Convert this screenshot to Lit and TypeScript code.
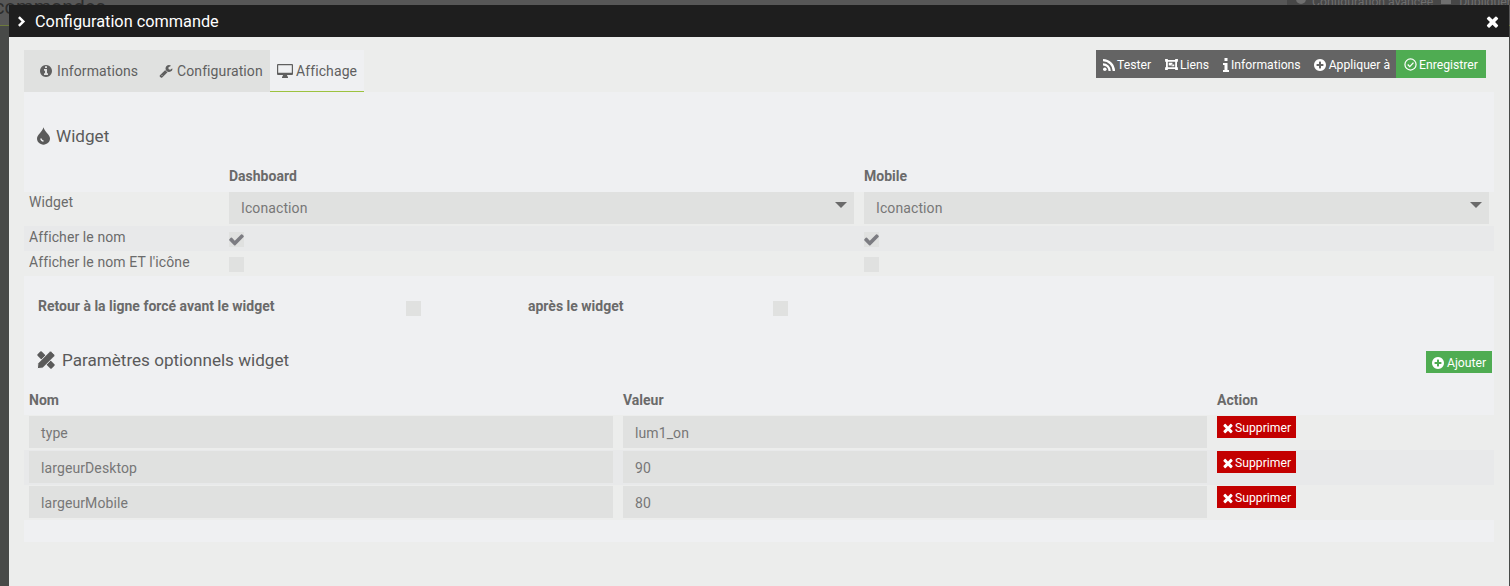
import { LitElement, html, css, svg } from "lit";
import { customElement } from "lit/decorators.js";

const I = (vb: string, body: unknown, w: number, h: number) => html`<svg class="ic" viewBox=${vb} width=${w} height=${h} fill="currentColor">${body}</svg>`;

const fa = (d: string, w = 14, h = 14, vb = "0 0 1792 1792") => I(vb, svg`<path d=${d}></path>`, w, h);

const infoCircle = "M1152 1376v-160q0-14-9-23t-23-9h-96v-512q0-14-9-23t-23-9h-320q-14 0-23 9t-9 23v160q0 14 9 23t23 9h96v320h-96q-14 0-23 9t-9 23v160q0 14 9 23t23 9h448q14 0 23-9t9-23zm-128-896v-160q0-14-9-23t-23-9h-192q-14 0-23 9t-9 23v160q0 14 9 23t23 9h192q14 0 23-9t9-23zm640 416q0 209-103 385.5t-279.5 279.5-385.5 103-385.5-103-279.5-279.5-103-385.5 103-385.5 279.5-279.5 385.5-103 385.5 103 279.5 279.5 103 385.5z";
const wrench = "M448 1472q0-26-19-45t-45-19-45 19-19 45 19 45 45 19 45-19 19-45zm644-420l-682 682q-37 37-90 37-52 0-91-37l-106-108q-38-36-38-90 0-53 38-91l681-681q39 98 114.5 173.5t173.5 114.5zm634-435q0 39-23 106-47 134-164.5 217.5t-258.5 83.5q-185 0-316.5-131.5t-131.5-316.5 131.5-316.5 316.5-131.5q58 0 121.5 16.5t107.5 46.5q16 11 16 28t-16 28l-293 169v224l193 107q5-3 79-48.5t135.5-81 70.5-35.5q15 0 23.5 10t8.5 25z";
const plusCircle = "M1344 960v-128q0-26-19-45t-45-19h-256v-256q0-26-19-45t-45-19h-128q-26 0-45 19t-19 45v256h-256q-26 0-45 19t-19 45v128q0 26 19 45t45 19h256v256q0 26 19 45t45 19h128q26 0 45-19t19-45v-256h256q26 0 45-19t19-45zm320-64q0 209-103 385.5t-279.5 279.5-385.5 103-385.5-103-279.5-279.5-103-385.5 103-385.5 279.5-279.5 385.5-103 385.5 103 279.5 279.5 103 385.5z";
const times = "M1490 1322q0 40-28 68l-136 136q-28 28-68 28t-68-28l-294-294-294 294q-28 28-68 28t-68-28l-136-136q-28-28-28-68t28-68l294-294-294-294q-28-28-28-68t28-68l136-136q28-28 68-28t68 28l294 294 294-294q28-28 68-28t68 28l136 136q28 28 28 68t-28 68l-294 294 294 294q28 28 28 68z";
const check = "M1671 566q0 40-28 68l-724 724-136 136q-28 28-68 28t-68-28l-136-136-362-362q-28-28-28-68t28-68l136-136q28-28 68-28t68 28l294 295 656-657q28-28 68-28t68 28l136 136q28 28 28 68z";

const desktop = I("0 0 16 14", svg`<path fill-rule="evenodd" d="M1 0h14a1 1 0 0 1 1 1v9a1 1 0 0 1-1 1H10q0 1 1 2v1H5v-1q1-1 1-2H1a1 1 0 0 1-1-1V1a1 1 0 0 1 1-1zm.2 1.200v7.600h13.600V1.200z"></path>`, 16, 14);
const drop = I("0 0 12 16", svg`<path fill-rule="evenodd" d="M6 0c.6 2.200 2 3.600 3.600 5.800C11 7.600 12 8.900 12 10.400 12 13.600 9.300 16 6 16S0 13.600 0 10.400C0 8.900 1 7.600 2.400 5.800 4 3.600 5.400 2.200 6 0zM3 10.300c0 1.800 1.300 3 3 3v-1.400c-.9 0-1.600-.7-1.600-1.600z"></path>`, 13, 18);
const tools = I("0 0 18 18", svg`<path fill-rule="evenodd" d="M.6 3.300 3.300.6a1 1 0 0 1 1.400 0l12.700 12.700a1 1 0 0 1 0 1.400l-2.700 2.700a1 1 0 0 1-1.400 0L.6 4.700a1 1 0 0 1 0-1.400z"></path><path stroke="#eff0f2" stroke-width="1" d="M12.600.6a1.300 1.300 0 0 1 1.900 0l2.900 2.900a1.300 1.300 0 0 1 0 1.900L5.700 17.100.4 17.600l.5-5.300z"></path>`, 18, 18);
const rss = I("0 0 12 12", svg`<circle cx="1.800" cy="10.200" r="1.800"></circle><path d="M0 4.200v2.300a5.500 5.500 0 0 1 5.500 5.500h2.300A7.800 7.800 0 0 0 0 4.200z"></path><path d="M0 0v2.300A9.700 9.700 0 0 1 9.700 12H12A12 12 0 0 0 0 0z"></path>`, 12, 12);
const ungroup = I("0 0 14 12", svg`<path fill-rule="evenodd" d="M0 0h3v1h8V0h3v3h-1v6h1v3h-3v-1H3v1H0V9h1V3H0zm3 3v6h8V3zM4 4h4v3H4zM7 6h3v2H7z"></path>`, 13, 11);
const infoI = I("0 0 6 14", svg`<rect x="1.500" y="0" width="3" height="3"></rect><path d="M0 5h4.500v7H6v2H0v-2h1.500V7H0z"></path>`, 6, 14);
const checkO = I("0 0 14 14", svg`<circle cx="7" cy="7" r="6" fill="none" stroke="currentColor" stroke-width="1.300"></circle><path d="M4 7l2.200 2.300L10.200 5" fill="none" stroke="currentColor" stroke-width="1.400"></path>`, 13, 13);
const gear = I("0 0 14 14", svg`<circle cx="7" cy="7" r="5"></circle>`, 14, 14);
const copy = I("0 0 14 14", svg`<rect x="0" y="0" width="10" height="12"></rect>`, 14, 14);

const params = [["type", "lum1_on"], ["largeurDesktop", "90"], ["largeurMobile", "80"]];

@customElement("app-root")
export class AppRoot extends LitElement {
  static styles = css`
    :host { display: block; position: relative; width: 1510px; height: 586px; overflow: hidden; background: #484a48; font-family: Roboto, "Liberation Sans", sans-serif; font-size: 14px; color: #6b6b6b; letter-spacing: .1px; }
    * { box-sizing: border-box; }
    .ic { display: block; flex: none; }

    .behind { display: flex; height: 26px; border-bottom: 1px solid #6d7a3c; background: #575757; }
    .behind-title { font-size: 20px; line-height: 14px; color: #2c2c2c; margin-left: -6px; }
    .behind-tools { margin-left: auto; display: flex; gap: 4px; height: 5px; width: 223px; padding-left: 7px; background: #474747; overflow: hidden; font-size: 12.2px; line-height: 4px; color: #6f6f6f; white-space: nowrap; letter-spacing: 0; }
    .behind-tools .ic { margin-top: -8px; }
    .behind-tools .sp { width: 7px; }

    .dialog { position: absolute; left: 9px; top: 5px; width: 1500px; height: 581px; display: flex; flex-direction: column; background: #ecedec; }
    .title { height: 32px; flex: none; background: #1e1e1e; color: #fff; display: flex; align-items: center; padding: 0 9px 0 9px; font-size: 16.3px; font-weight: 400; letter-spacing: 0; }
    .title .chev { width: 9px; margin-right: 8px; }
    .title .close { margin-left: auto; margin-right: -1px; }

    .body { padding: 13px 15px 0; flex: 1; }
    .topbar { display: flex; justify-content: space-between; align-items: flex-start; }
    .tabs { display: flex; height: 42px; background: #e0e1e0; }
    .tab { display: flex; align-items: center; gap: 4px; font-size: 14px; color: #5f5f5f; padding: 0 7px 0 7px; }
    .tab.first { padding: 0 13px 0 15px; width: 126px; }
    .tab.second { width: 120px; padding: 0 0 0 9px; }
    .tab.active { width: 94px; background: #eff0f2; border-bottom: 1px solid #9cc23f; gap: 3px; }
    .actions { display: flex; height: 28px; margin-right: 8px; }
    .btn { display: flex; align-items: center; gap: 2px; color: #fff; font-size: 12.2px; font-weight: 400; letter-spacing: 0; white-space: nowrap; padding-top: 1px; }
    .grey { background: #646464; padding: 1px 0 0 7px; gap: 14px; width: 300px; }
    .grey .btn { background: none; padding-top: 0; }
    .grey .plus { margin-left: -2px; }
    .save { background: #4fac52; padding: 1px 0 0 8px; width: 90px; }

    .panel { height: 450px; background: #eff0f2; display: flex; flex-direction: column; }
    .heading { display: flex; align-items: center; font-size: 17.1px; color: #5a5a5a; padding-left: 13px; letter-spacing: 0; }
    .heading.one { height: 74px; padding-top: 29px; padding-bottom: 15px; gap: 6px; }
    .grid-row { display: grid; grid-template-columns: 205px 625px 10px 625px; align-items: start; }
    .colhead { height: 26px; font-weight: 700; color: #6a6a6a; font-size: 14px; line-height: 20px; letter-spacing: 0; }
    .colhead > *:first-child { grid-column: 2; }
    .colhead > *:last-child { grid-column: 4; }
    .cell-label { padding-left: 5px; font-size: 14px; line-height: 20px; }
    .r-check .cell-label { padding-top: 1px; }
    .r-select { height: 34px; }
    .r-check { height: 25px; }
    .shade { background: #e8e9ea; }
    .plain { background: #ecedec; }
    .field { background: #e0e1e0; height: 32px; display: flex; align-items: center; padding-left: 12px; color: #777; font-size: 14px; }
    .prow .field { padding-top: 1px; }
    .select { position: relative; }
    .select::after { content: ""; position: absolute; right: 7px; top: 10px; border-left: 6px solid transparent; border-right: 6px solid transparent; border-top: 6px solid #6a6a6a; }
    .box { width: 15px; height: 15px; background: #e0e1e0; margin-top: 6px; position: relative; color: #7c7c82; }
    .box .ic { position: absolute; left: -1px; top: -1px; }
    .force { display: flex; align-items: flex-start; height: 50px; padding-top: 20px; padding-left: 14px; font-weight: 700; color: #6a6a6a; font-size: 14px; line-height: 20px; letter-spacing: 0; }
    .force .lbl1 { width: 368px; }
    .force .lbl2 { width: 245px; }
    .force .box { margin-top: 5px; }
    .force .gap { width: 107px; }
    .head2 { display: flex; align-items: center; justify-content: space-between; padding: 0 2px 0 13px; height: 46px; margin-top: 11px; }
    .head2 .heading { padding-left: 0; gap: 7px; }
    .add { background: #4fac52; height: 22px; width: 66px; padding-left: 5px; margin-top: 4px; }
    .ptable-head { display: grid; grid-template-columns: 594px 594px 1fr; padding-left: 5px; height: 25px; font-weight: 700; color: #6a6a6a; line-height: 20px; font-size: 14px; margin-top: 7px; letter-spacing: 0; }
    .prow { height: 35px; display: grid; grid-template-columns: 584px 584px 1fr; column-gap: 10px; padding: 1px 0 0 5px; align-items: start; }
    .del { background: #c30000; height: 22px; width: 79px; padding-left: 4px; gap: 0; }
  `;

  render() {
    return html`
      <div class="behind">
        <div class="behind-title">commandes</div>
        <div class="behind-tools">${gear}<span>Configuration avancée</span><span class="sp"></span>${copy}<span>Dupliquer</span></div>
      </div>
      <div class="dialog">
        <div class="title">
          <span class="chev">${I("0 0 9 12", svg`<path d="M0 2 2 0l6 6-6 6-2-2 4-4z"></path>`, 8, 11)}</span>
          Configuration commande
          <span class="close">${fa(times, 17, 17)}</span>
        </div>
        <div class="body">
          <div class="topbar">
            <div class="tabs">
              <div class="tab first">${fa(infoCircle)}Informations</div>
              <div class="tab second">${fa(wrench)}Configuration</div>
              <div class="tab active">${desktop}Affichage</div>
            </div>
            <div class="actions">
              <div class="btn grey">
                <span class="btn">${rss}Tester</span>
                <span class="btn">${ungroup}Liens</span>
                <span class="btn">${infoI}Informations</span>
                <span class="btn plus">${fa(plusCircle, 14, 14)}Appliquer à</span>
              </div>
              <div class="btn save">${checkO}Enregistrer</div>
            </div>
          </div>
          <div class="panel">
            <div class="heading one">${drop}Widget</div>
            <div class="grid-row colhead"><div>Dashboard</div><div>Mobile</div></div>
            <div class="grid-row r-select plain">
              <div class="cell-label">Widget</div>
              <div class="field select">Iconaction</div><div></div>
              <div class="field select">Iconaction</div>
            </div>
            <div class="grid-row r-check shade">
              <div class="cell-label">Afficher le nom</div>
              <div class="box">${fa(check, 17, 17)}</div><div></div>
              <div class="box">${fa(check, 17, 17)}</div>
            </div>
            <div class="grid-row r-check plain">
              <div class="cell-label">Afficher le nom ET l'icône</div>
              <div class="box"></div><div></div>
              <div class="box"></div>
            </div>
            <div class="force">
              <div class="lbl1">Retour à la ligne forcé avant le widget</div>
              <div class="box"></div>
              <div class="gap"></div>
              <div class="lbl2">après le widget</div>
              <div class="box"></div>
            </div>
            <div class="head2">
              <div class="heading">${tools}Paramètres optionnels widget</div>
              <div class="btn add">${fa(plusCircle, 14, 14)}Ajouter</div>
            </div>
            <div class="ptable-head"><div>Nom</div><div>Valeur</div><div>Action</div></div>
            ${params.map(([k, v], i) => html`
              <div class="prow ${i === 1 ? "shade" : "plain"}">
                <div class="field">${k}</div>
                <div class="field">${v}</div>
                <div><div class="btn del">${fa(times, 14, 14)}Supprimer</div></div>
              </div>`)}
          </div>
        </div>
      </div>
    `;
  }
}
